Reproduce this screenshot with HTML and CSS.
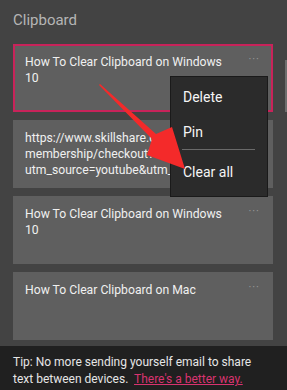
FILE: index.html
```html
<!DOCTYPE html>
<html lang="en">
<head>
    <meta charset="UTF-8">
    <meta name="viewport" content="width=device-width, initial-scale=1.0">
    <title>Clipboard</title>
    <link rel="stylesheet" href="styles.css">
</head>
<body>
    <div class="panel">
        <h1 class="title">Clipboard</h1>

        <div class="clip-list">
            <div class="clip selected">
                <p class="clip-text">How To Clear Clipboard on Windows 10</p>
                <span class="more">···</span>
            </div>
            <div class="clip">
                <p class="clip-text url">https://www.skillshare.com/<br>membership/checkout?<br>utm_source=youtube&amp;utm_medium</p>
            </div>
            <div class="clip">
                <p class="clip-text">How To Clear Clipboard on Windows 10</p>
                <span class="more">···</span>
            </div>
            <div class="clip">
                <p class="clip-text">How To Clear Clipboard on Mac</p>
                <span class="more">···</span>
            </div>
        </div>

        <div class="tip">
            Tip: No more sending yourself email to share text between devices.&nbsp;
            <a href="#" class="tip-link">There's a better way.</a>
        </div>

        <div class="scroll-thumb"></div>

        <!-- context menu over the first clip -->
        <div class="menu">
            <div class="menu-item">Delete</div>
            <div class="menu-item">Pin</div>
            <div class="menu-sep"></div>
            <div class="menu-item">Clear all</div>
        </div>

        <!-- annotation arrow -->
        <svg class="arrow" width="287" height="390" viewBox="0 0 287 390">
            <polygon points="100,84 156,134 172,127 185,169 147,155 152,139 99,85" fill="#f42a2a"/>
        </svg>
    </div>
</body>
</html>
```

FILE: styles.css
```css
* {
    box-sizing: border-box;
}

body {
    margin: 0;
    background: #434343;
    font-family: Roboto, 'Noto Sans', sans-serif;
    color: #f2f2f2;
}

.panel {
    position: relative;
    width: 287px;
    height: 390px;
    overflow: hidden;
    display: flex;
    flex-direction: column;
    background: #434343;
}

.title {
    margin: 0;
    padding: 11px 13px 0;
    height: 44px;
    font-size: 15px;
    font-weight: 400;
    color: #b5b5b5;
}

.clip-list {
    flex: 1;
    display: flex;
    flex-direction: column;
    gap: 8px;
    padding: 0 14px 0 13px;
}

.clip {
    position: relative;
    height: 68px;
    background: #5f5f5f;
    padding: 10px 45px 0 12px;
}

.clip.selected {
    border: 2px solid #c8235a;
    padding: 8px 43px 0 10px;
}

.clip-text {
    margin: 0;
    font-size: 12.2px;
    line-height: 16px;
    color: #f0f0f0;
}

.clip-text.url {
    white-space: nowrap;
    overflow: hidden;
}

.more {
    position: absolute;
    top: 9px;
    right: 13px;
    font-size: 11px;
    letter-spacing: 1px;
    color: #9c9c9c;
}

.clip.selected .more {
    top: 7px;
    right: 11px;
}

.tip {
    height: 44px;
    background: #202020;
    padding: 8px 13px 0;
    font-size: 12px;
    line-height: 17px;
    color: #e6e6e6;
}

.tip-link {
    color: #d9336f;
    text-decoration: underline;
}

.scroll-thumb {
    position: absolute;
    right: 0;
    top: 60px;
    width: 2px;
    height: 52px;
    background: #6e6e6e;
}

.menu {
    position: absolute;
    left: 170px;
    top: 76px;
    width: 98px;
    height: 121px;
    background: #2b2b2b;
    border: 1px solid #1a1a1a;
    padding-top: 6px;
}

.menu-item {
    height: 35px;
    line-height: 28px;
    padding-left: 12px;
    font-size: 14px;
    color: #f5f5f5;
}

.menu-sep {
    height: 1px;
    background: #6a6a6a;
    margin: -4px 12px 8px 11px;
}

.arrow {
    position: absolute;
    left: 0;
    top: 0;
    pointer-events: none;
}
```
